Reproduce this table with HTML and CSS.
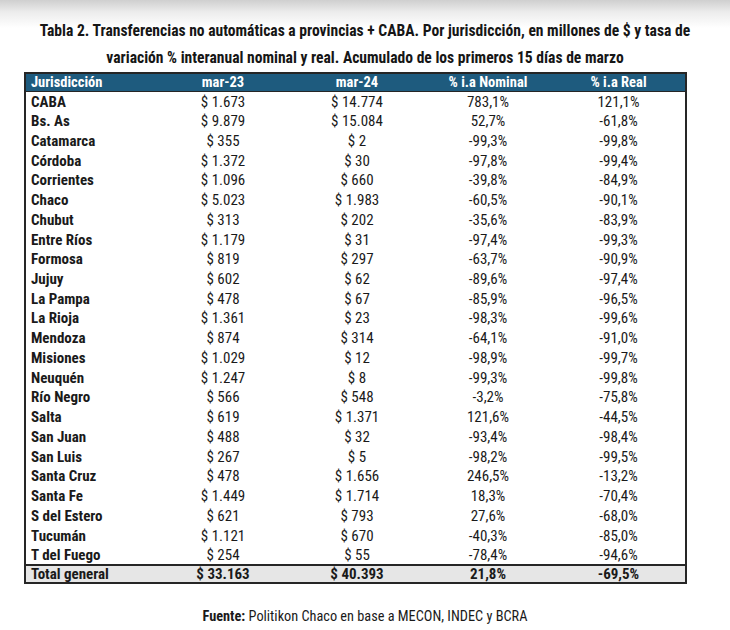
FILE: index.html
```html
<!DOCTYPE html>
<html lang="es">
<head>
<meta charset="utf-8">
<link rel="stylesheet" href="styles.css">
</head>
<body>
<div class="page">
  <h1 class="title">Tabla 2. Transferencias no automáticas a provincias + CABA. Por jurisdicción, en millones de $ y tasa de<br>variación % interanual nominal y real. Acumulado de los primeros 15 días de marzo</h1>
  <table class="data">
    <colgroup>
      <col class="c1"><col class="c2"><col class="c3"><col class="c4"><col class="c5">
    </colgroup>
    <thead>
      <tr><th class="name">Jurisdicción</th><th>mar-23</th><th>mar-24</th><th>% i.a Nominal</th><th>% i.a Real</th></tr>
    </thead>
    <tbody>
      <tr><td class="name">CABA</td><td>$ 1.673</td><td>$ 14.774</td><td>783,1%</td><td>121,1%</td></tr>
      <tr><td class="name">Bs. As</td><td>$ 9.879</td><td>$ 15.084</td><td>52,7%</td><td>-61,8%</td></tr>
      <tr><td class="name">Catamarca</td><td>$ 355</td><td>$ 2</td><td>-99,3%</td><td>-99,8%</td></tr>
      <tr><td class="name">Córdoba</td><td>$ 1.372</td><td>$ 30</td><td>-97,8%</td><td>-99,4%</td></tr>
      <tr><td class="name">Corrientes</td><td>$ 1.096</td><td>$ 660</td><td>-39,8%</td><td>-84,9%</td></tr>
      <tr><td class="name">Chaco</td><td>$ 5.023</td><td>$ 1.983</td><td>-60,5%</td><td>-90,1%</td></tr>
      <tr><td class="name">Chubut</td><td>$ 313</td><td>$ 202</td><td>-35,6%</td><td>-83,9%</td></tr>
      <tr><td class="name">Entre Ríos</td><td>$ 1.179</td><td>$ 31</td><td>-97,4%</td><td>-99,3%</td></tr>
      <tr><td class="name">Formosa</td><td>$ 819</td><td>$ 297</td><td>-63,7%</td><td>-90,9%</td></tr>
      <tr><td class="name">Jujuy</td><td>$ 602</td><td>$ 62</td><td>-89,6%</td><td>-97,4%</td></tr>
      <tr><td class="name">La Pampa</td><td>$ 478</td><td>$ 67</td><td>-85,9%</td><td>-96,5%</td></tr>
      <tr><td class="name">La Rioja</td><td>$ 1.361</td><td>$ 23</td><td>-98,3%</td><td>-99,6%</td></tr>
      <tr><td class="name">Mendoza</td><td>$ 874</td><td>$ 314</td><td>-64,1%</td><td>-91,0%</td></tr>
      <tr><td class="name">Misiones</td><td>$ 1.029</td><td>$ 12</td><td>-98,9%</td><td>-99,7%</td></tr>
      <tr><td class="name">Neuquén</td><td>$ 1.247</td><td>$ 8</td><td>-99,3%</td><td>-99,8%</td></tr>
      <tr><td class="name">Río Negro</td><td>$ 566</td><td>$ 548</td><td>-3,2%</td><td>-75,8%</td></tr>
      <tr><td class="name">Salta</td><td>$ 619</td><td>$ 1.371</td><td>121,6%</td><td>-44,5%</td></tr>
      <tr><td class="name">San Juan</td><td>$ 488</td><td>$ 32</td><td>-93,4%</td><td>-98,4%</td></tr>
      <tr><td class="name">San Luis</td><td>$ 267</td><td>$ 5</td><td>-98,2%</td><td>-99,5%</td></tr>
      <tr><td class="name">Santa Cruz</td><td>$ 478</td><td>$ 1.656</td><td>246,5%</td><td>-13,2%</td></tr>
      <tr><td class="name">Santa Fe</td><td>$ 1.449</td><td>$ 1.714</td><td>18,3%</td><td>-70,4%</td></tr>
      <tr><td class="name">S del Estero</td><td>$ 621</td><td>$ 793</td><td>27,6%</td><td>-68,0%</td></tr>
      <tr><td class="name">Tucumán</td><td>$ 1.121</td><td>$ 670</td><td>-40,3%</td><td>-85,0%</td></tr>
      <tr><td class="name">T del Fuego</td><td>$ 254</td><td>$ 55</td><td>-78,4%</td><td>-94,6%</td></tr>
    </tbody>
    <tfoot>
      <tr><td class="name">Total general</td><td>$ 33.163</td><td>$ 40.393</td><td>21,8%</td><td>-69,5%</td></tr>
    </tfoot>
  </table>
  <p class="source"><b>Fuente:</b> Politikon Chaco en base a MECON, INDEC y BCRA</p>
</div>
</body>
</html>
```

FILE: styles.css
```css
html, body {
  margin: 0;
  padding: 0;
  background: #ffffff;
}
body {
  width: 730px;
  height: 630px;
  overflow: hidden;
  background: linear-gradient(to bottom, #cfcfcf 0px, #ececec 12px, #ffffff 28px, #ffffff 100%);
  font-family: "Roboto", "Liberation Sans", sans-serif;
  font-stretch: 75%;
  color: #1a1a1a;
}
.page {
  display: flex;
  flex-direction: column;
  align-items: flex-start;
  padding-top: 18px;
}
.title {
  align-self: stretch;
  margin: 0;
  font-size: 15.6px;
  font-weight: bold;
  line-height: 27px;
  text-align: center;
  color: #161616;
}
.data {
  margin-left: 24px;
  width: 661px;
  border-collapse: collapse;
  table-layout: fixed;
  border: 2px solid #262626;
  font-size: 15px;
}
.c1 { width: 131px; }
.c2 { width: 134px; }
.c3 { width: 134px; }
.c4 { width: 128px; }
.c5 { width: 134px; }
.data th {
  background: #1e5b7e;
  color: #ffffff;
  font-weight: bold;
  font-size: 14.5px;
  height: 17px;
  line-height: 16px;
  padding: 0;
  text-align: center;
  border-bottom: 1px solid #262626;
}
.data tbody tr {
  height: 19.74px;
}
.data td {
  padding: 0;
  text-align: center;
  line-height: 16px;
  font-stretch: 87.5%;
}
.data th.name, .data td.name {
  text-align: left;
  padding-left: 5px;
  font-weight: bold;
  font-stretch: 75%;
}
.data tfoot tr {
  height: 18px;
}
.data tfoot td {
  font-weight: bold;
  font-stretch: 82%;
  background: #e6e6e6;
  border-top: 2px solid #262626;
}
.data tfoot td.name {
  font-stretch: 80%;
}
.source {
  align-self: stretch;
  text-align: center;
  margin: 24px 0 0 0;
  font-size: 14.3px;
  color: #1a1a1a;
}
```
